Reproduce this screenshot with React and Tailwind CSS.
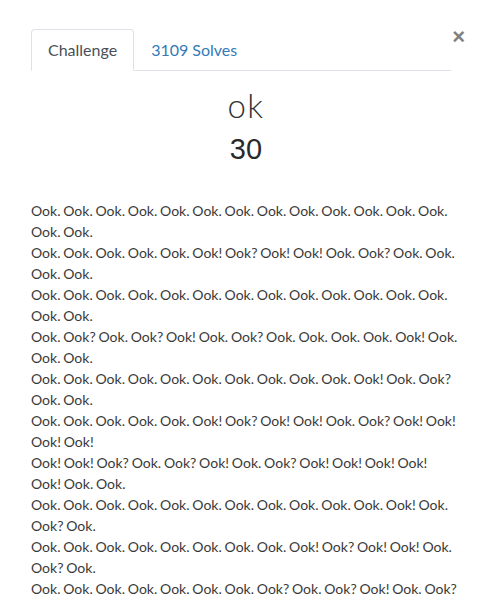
import React from "react";

const lines = [
  "Ook. Ook. Ook. Ook. Ook. Ook. Ook. Ook. Ook. Ook. Ook. Ook. Ook.",
  "Ook. Ook.",
  "Ook. Ook. Ook. Ook. Ook. Ook! Ook? Ook! Ook! Ook. Ook? Ook. Ook.",
  "Ook. Ook.",
  "Ook. Ook. Ook. Ook. Ook. Ook. Ook. Ook. Ook. Ook. Ook. Ook. Ook.",
  "Ook. Ook.",
  "Ook. Ook? Ook. Ook? Ook! Ook. Ook? Ook. Ook. Ook. Ook. Ook! Ook.",
  "Ook. Ook.",
  "Ook. Ook. Ook. Ook. Ook. Ook. Ook. Ook. Ook. Ook. Ook! Ook. Ook?",
  "Ook. Ook.",
  "Ook. Ook. Ook. Ook. Ook. Ook! Ook? Ook! Ook! Ook. Ook? Ook! Ook!",
  "Ook! Ook!",
  "Ook! Ook! Ook? Ook. Ook? Ook! Ook. Ook? Ook! Ook! Ook! Ook!",
  "Ook! Ook. Ook.",
  "Ook. Ook. Ook. Ook. Ook. Ook. Ook. Ook. Ook. Ook. Ook. Ook! Ook.",
  "Ook? Ook.",
  "Ook. Ook. Ook. Ook. Ook. Ook. Ook. Ook. Ook! Ook? Ook! Ook! Ook.",
  "Ook? Ook.",
  "Ook. Ook. Ook. Ook. Ook. Ook. Ook. Ook? Ook. Ook? Ook! Ook. Ook?",
  "Ook. Ook.",
  "Ook. Ook. Ook. Ook. Ook. Ook. Ook. Ook. Ook. Ook. Ook. Ook. Ook.",
  "Ook. Ook.",
];

export default function App() {
  return (
    <div className="h-[600px] overflow-hidden bg-white font-['Lato','Noto_Sans',sans-serif]">
      <div className="pl-[31px] pt-[29px] w-[461px] relative">
        <button className="absolute right-[-4px] top-[26px] text-[22px] font-bold leading-none text-[#000] opacity-50 font-['Liberation_Sans',sans-serif]">
          ×
        </button>
        <div className="flex w-[420px] border-b border-[#dee2e6]">
          <div className="-mb-px border border-[#dee2e6] border-b-white bg-white rounded-t-[4px] px-4 py-2 text-[16px] leading-6 text-[#495057]">
            Challenge
          </div>
          <div className="-mb-px border border-transparent px-4 py-2 text-[16px] leading-6 text-[#337ab7]">
            3109 Solves
          </div>
        </div>
        <div className="flex flex-col items-center mt-[15px]">
          <div className="text-[33px] font-light leading-[38px] tracking-[1.5px] text-[#333]">ok</div>
          <div className="text-[29px] font-normal leading-[40px] mt-[5px] text-[#2a2a2a] font-['Liberation_Sans',sans-serif]">30</div>
        </div>
        <div className="mt-[31px] whitespace-nowrap text-[14px] leading-[21px] [word-spacing:-0.8px] text-[#3a3a3a]">
          {lines.map((l, i) => (
            <React.Fragment key={i}>
              {l}
              <br />
            </React.Fragment>
          ))}
        </div>
      </div>
    </div>
  );
}
